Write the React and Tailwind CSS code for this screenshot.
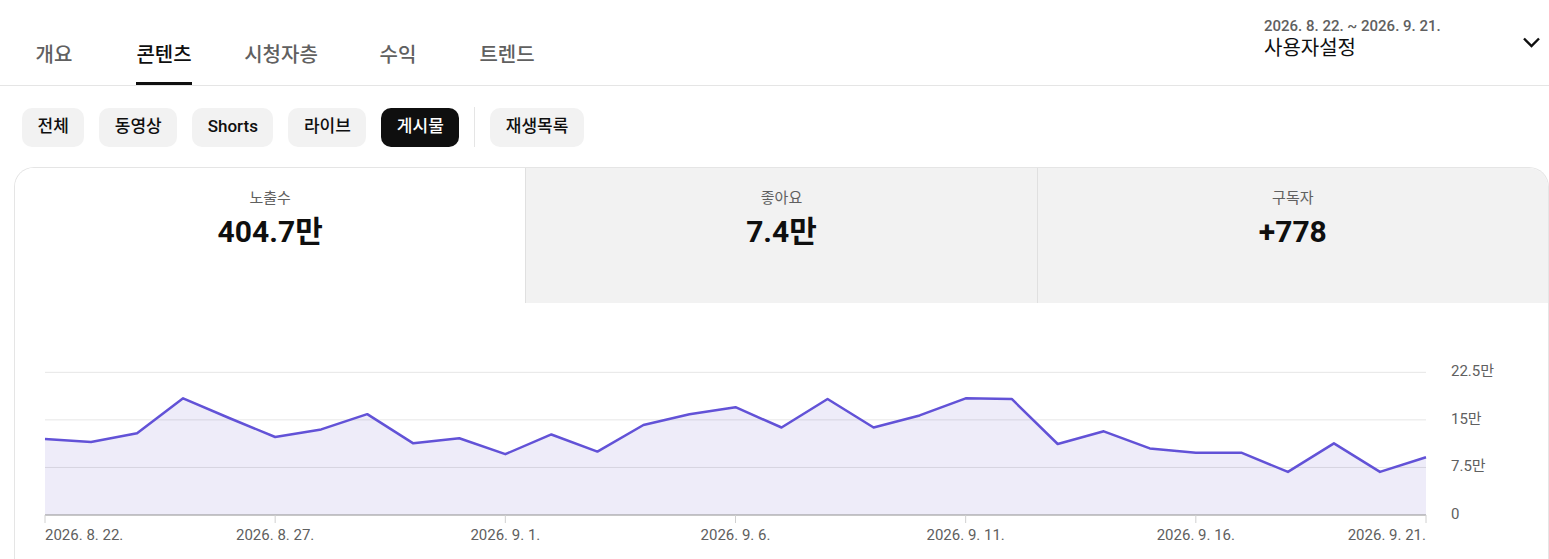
const TABS = [
  { label: "개요", w: "w-[100px]" },
  { label: "콘텐츠", w: "w-[120px]", active: true },
  { label: "시청자층", w: "w-[114px]" },
  { label: "수익", w: "w-[120px]" },
  { label: "트렌드", w: "w-[98px]" },
];

const CHIPS = [
  { label: "전체" },
  { label: "동영상" },
  { label: "Shorts" },
  { label: "라이브" },
  { label: "게시물", active: true },
];

const METRICS = [
  { label: "노출수", value: "404.7만", active: true },
  { label: "좋아요", value: "7.4만" },
  { label: "구독자", value: "+778" },
];

// daily impressions, unit 만
const DATA = [
  12.0, 11.5, 12.9, 18.4, 15.3, 12.3, 13.5, 15.9, 11.3, 12.1, 9.6, 12.7, 10.0,
  14.2, 15.9, 17.0, 13.8, 18.3, 13.8, 15.7, 18.4, 18.3, 11.2, 13.2, 10.5, 9.8,
  9.8, 6.8, 11.3, 6.8, 9.1,
];

const X0 = 45;
const X1 = 1426;
const Y_TOP = 371.33;
const Y_BASE = 514;
const Y_MAX = 22.5;

const xAt = (i) => X0 + (i * (X1 - X0)) / (DATA.length - 1);
const yAt = (v) => Y_BASE - (v / Y_MAX) * (Y_BASE - Y_TOP);

const X_LABELS = [
  { text: "2026. 8. 22.", i: 0, anchor: "start" },
  { text: "2026. 8. 27.", i: 5, anchor: "middle" },
  { text: "2026. 9. 1.", i: 10, anchor: "middle" },
  { text: "2026. 9. 6.", i: 15, anchor: "middle" },
  { text: "2026. 9. 11.", i: 20, anchor: "middle" },
  { text: "2026. 9. 16.", i: 25, anchor: "middle" },
  { text: "2026. 9. 21.", i: 30, anchor: "end" },
];

const Y_LABELS = [
  { text: "22.5만", v: 22.5 },
  { text: "15만", v: 15 },
  { text: "7.5만", v: 7.5 },
  { text: "0", v: 0 },
];

function Chart() {
  const line = DATA.map((v, i) => `${i === 0 ? "M" : "L"}${xAt(i)} ${yAt(v)}`).join(" ");
  const area = `${line} L${X1} ${Y_BASE} L${X0} ${Y_BASE} Z`;

  return (
    <svg width="1533" height="257" viewBox="15 302 1533 257" className="block">
      <path d={area} fill="#eeecf9" />

      {/* grid */}
      {[22.5, 15, 7.5].map((v) => (
        <line key={v} x1={X0} x2={X1} y1={yAt(v)} y2={yAt(v)} stroke="rgba(0,0,0,0.1)" strokeWidth="1" />
      ))}
      <line x1={X0} x2={X1} y1={Y_BASE} y2={Y_BASE} stroke="#909090" strokeWidth="1" />
      {X_LABELS.map((l) => (
        <line key={l.i} x1={xAt(l.i)} x2={xAt(l.i)} y1={Y_BASE} y2={Y_BASE + 8} stroke="#d0d0d0" strokeWidth="1" />
      ))}

      <path d={line} fill="none" stroke="#6252d7" strokeWidth="2.5" strokeLinejoin="round" />

      {Y_LABELS.map((l) => (
        <text key={l.text} x="1451" y={yAt(l.v)} dominantBaseline="middle" fontSize="15" fill="#606060">
          {l.text}
        </text>
      ))}
      {X_LABELS.map((l) => (
        <text key={l.text} x={xAt(l.i)} y="535" dominantBaseline="middle" textAnchor={l.anchor} fontSize="15" fill="#606060">
          {l.text}
        </text>
      ))}
    </svg>
  );
}

export default function App() {
  return (
    <div className="w-full bg-white font-[Roboto,'Noto_Sans_CJK_KR',sans-serif]">
      {/* Header */}
      <header className="flex h-[86px] justify-between border-b border-[#e5e5e5]">
        <nav className="flex pl-[4px]">
          {TABS.map((t) => (
            <div key={t.label} className={`${t.w} flex justify-center`}>
              <div className="flex flex-col justify-end">
                <span
                  className={`text-[20px] leading-[26px] font-medium ${
                    t.active ? "text-[#0f0f0f]" : "text-[#606060]"
                  }`}
                >
                  {t.label}
                </span>
                <div className={`mt-[14px] h-[3px] ${t.active ? "bg-[#0f0f0f]" : ""}`}></div>
              </div>
            </div>
          ))}
        </nav>

        <div className="flex items-start pt-[16px] pr-[6px]">
          <div className="w-[255px]">
            <p className="text-[15px] leading-[20px] font-medium text-[#606060]">
              2026. 8. 22. ~ 2026. 9. 21.
            </p>
            <p className="text-[20px] leading-[24px] text-[#0f0f0f]">사용자설정</p>
          </div>
          <svg className="mt-[14px]" width="24" height="24" viewBox="0 0 24 24">
            <path d="M5 8.5 L12.5 16 L20 8.5" fill="none" stroke="#0f0f0f" strokeWidth="2.4" />
          </svg>
        </div>
      </header>

      {/* Chips */}
      <div className="flex items-center gap-[15px] pl-[22px] pt-[21px]">
        {CHIPS.map((c) => (
          <button
            key={c.label}
            className={`h-[39px] rounded-[10px] px-[15.5px] text-[17px] font-medium ${
              c.active ? "bg-[#0f0f0f] text-white" : "bg-[#f2f2f2] text-[#0f0f0f]"
            }`}
          >
            {c.label}
          </button>
        ))}
        <div className="h-[40px] w-px bg-[#e5e5e5]"></div>
        <button className="h-[39px] rounded-[10px] bg-[#f2f2f2] px-[15.5px] text-[17px] font-medium text-[#0f0f0f]">
          재생목록
        </button>
      </div>

      {/* Card */}
      <div className="mt-[20px] ml-[14px] overflow-hidden rounded-t-[20px] border border-b-0 border-[#e5e5e5]">
        <div className="flex h-[135px]">
          {METRICS.map((m, i) => (
            <div
              key={m.label}
              className={`flex flex-1 flex-col items-center pt-[20px] ${
                m.active ? "bg-white" : "bg-[#f2f2f2]"
              } ${i < 2 ? "border-r border-[#e0e0e0]" : ""}`}
            >
              <span className="text-[15px] leading-[20px] text-[#606060]">{m.label}</span>
              <span className="mt-[6px] text-[30px] leading-[36px] font-bold text-[#0f0f0f]">
                {m.value}
              </span>
            </div>
          ))}
        </div>
        <Chart />
      </div>
    </div>
  );
}
